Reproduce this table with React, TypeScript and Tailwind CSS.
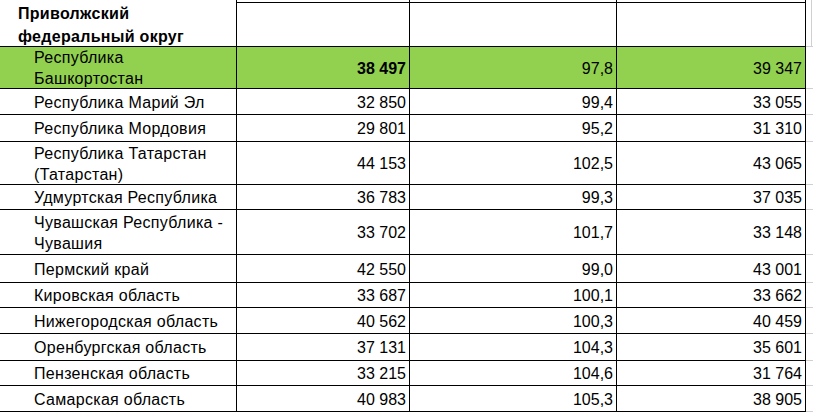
import React from "react";

type Row = { name: React.ReactNode; a: string; b: string; c: string; h: number; green?: boolean };

const rows: Row[] = [
  { name: <>Республика<br />Башкортостан</>, a: "38 497", b: "97,8", c: "39 347", h: 42, green: true },
  { name: "Республика Марий Эл", a: "32 850", b: "99,4", c: "33 055", h: 26 },
  { name: "Республика Мордовия", a: "29 801", b: "95,2", c: "31 310", h: 27 },
  { name: <>Республика Татарстан<br />(Татарстан)</>, a: "44 153", b: "102,5", c: "43 065", h: 43 },
  { name: "Удмуртская Республика", a: "36 783", b: "99,3", c: "37 035", h: 25 },
  { name: <>Чувашская Республика -<br />Чувашия</>, a: "33 702", b: "101,7", c: "33 148", h: 45 },
  { name: "Пермский край", a: "42 550", b: "99,0", c: "43 001", h: 28 },
  { name: "Кировская область", a: "33 687", b: "100,1", c: "33 662", h: 25 },
  { name: "Нижегородская область", a: "40 562", b: "100,3", c: "40 459", h: 26 },
  { name: "Оренбургская область", a: "37 131", b: "104,3", c: "35 601", h: 27 },
  { name: "Пензенская область", a: "33 215", b: "104,6", c: "31 764", h: 25 },
  { name: "Самарская область", a: "40 983", b: "105,3", c: "38 905", h: 26 },
];

export default function App() {
  return (
    <div
      className="w-[813px] h-[412px] overflow-hidden bg-white text-black text-[16px]"
      style={{ fontFamily: '"Liberation Sans", Arial, sans-serif' }}
    >
      {/* top strip */}
      <div className="flex h-[3px]">
        <div className="w-[237px] border-r border-black" />
        <div className="w-[173px] border-r border-b border-black" />
        <div className="w-[207px] border-r border-b border-black" />
        <div className="w-[189px] border-r border-b border-black" />
        <div className="w-[6px] border-r border-[#d0d0d0]" />
      </div>
      {/* header */}
      <div className="flex h-[44px]">
        <div className="w-[237px] border-r border-b border-black pl-[18px] flex items-start font-bold leading-[23px] tracking-[0.3px]">
          <div className="-mt-[1px]">
            Приволжский
            <br />
            федеральный округ
          </div>
        </div>
        <div className="w-[173px] border-r border-b border-black" />
        <div className="w-[207px] border-r border-b border-black" />
        <div className="w-[189px] border-r border-b border-black" />
        <div className="w-[6px] border-r border-b border-[#d0d0d0]" />
        <div className="flex-1 border-b border-[#d0d0d0]" />
      </div>
      {rows.map((r, i) => (
        <div key={i} className={`flex ${r.green ? "bg-[#92d050]" : ""}`} style={{ height: r.h }}>
          <div className="w-[237px] border-r border-b border-black pl-[34px] flex items-center leading-[21px] pt-[1px] tracking-[0.3px]">
            <div>{r.name}</div>
          </div>
          <div
            className={`w-[173px] border-r border-b border-black flex items-center justify-end pr-[3px] pt-[2px] ${
              r.green ? "font-bold" : ""
            }`}
          >
            {r.a}
          </div>
          <div className="w-[207px] border-r border-b border-black flex items-center justify-end pr-[3px] pt-[2px]">
            {r.b}
          </div>
          <div className="w-[189px] border-r border-b border-black flex items-center justify-end pr-[3px] pt-[2px]">
            {r.c}
          </div>
          <div className="flex-1 border-b border-[#d0d0d0] bg-white" />
        </div>
      ))}
    </div>
  );
}
